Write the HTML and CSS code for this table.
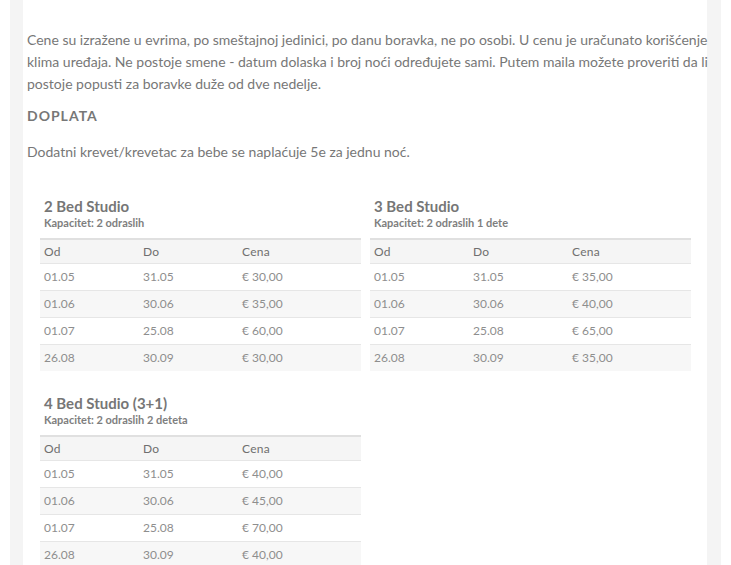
FILE: index.html
```html
<!DOCTYPE html>
<html lang="sr">
<head>
<meta charset="utf-8">
<title>Cene</title>
<link rel="stylesheet" href="styles.css">
</head>
<body>
<div class="frame">
  <main class="panel">
    <p class="intro">Cene su izražene u evrima, po smeštajnoj jedinici, po danu boravka, ne po osobi. U cenu je uračunato korišćenje<br>klima uređaja. Ne postoje smene - datum dolaska i broj noći određujete sami. Putem maila možete proveriti da li<br>postoje popusti za boravke duže od dve nedelje.</p>
    <p class="label">DOPLATA</p>
    <p class="note">Dodatni krevet/krevetac za bebe se naplaćuje 5e za jednu noć.</p>

    <div class="rooms">
      <section class="room">
        <h3 class="room-title">2 Bed Studio</h3>
        <p class="room-cap">Kapacitet: 2 odraslih</p>
        <table class="prices">
          <thead><tr><th>Od</th><th>Do</th><th>Cena</th></tr></thead>
          <tbody>
            <tr><td>01.05</td><td>31.05</td><td>€ 30,00</td></tr>
            <tr><td>01.06</td><td>30.06</td><td>€ 35,00</td></tr>
            <tr><td>01.07</td><td>25.08</td><td>€ 60,00</td></tr>
            <tr><td>26.08</td><td>30.09</td><td>€ 30,00</td></tr>
          </tbody>
        </table>
      </section>
      <section class="room">
        <h3 class="room-title">3 Bed Studio</h3>
        <p class="room-cap">Kapacitet: 2 odraslih 1 dete</p>
        <table class="prices">
          <thead><tr><th>Od</th><th>Do</th><th>Cena</th></tr></thead>
          <tbody>
            <tr><td>01.05</td><td>31.05</td><td>€ 35,00</td></tr>
            <tr><td>01.06</td><td>30.06</td><td>€ 40,00</td></tr>
            <tr><td>01.07</td><td>25.08</td><td>€ 65,00</td></tr>
            <tr><td>26.08</td><td>30.09</td><td>€ 35,00</td></tr>
          </tbody>
        </table>
      </section>
      <section class="room">
        <h3 class="room-title">4 Bed Studio (3+1)</h3>
        <p class="room-cap">Kapacitet: 2 odraslih 2 deteta</p>
        <table class="prices">
          <thead><tr><th>Od</th><th>Do</th><th>Cena</th></tr></thead>
          <tbody>
            <tr><td>01.05</td><td>31.05</td><td>€ 40,00</td></tr>
            <tr><td>01.06</td><td>30.06</td><td>€ 45,00</td></tr>
            <tr><td>01.07</td><td>25.08</td><td>€ 70,00</td></tr>
            <tr><td>26.08</td><td>30.09</td><td>€ 40,00</td></tr>
          </tbody>
        </table>
      </section>
    </div>
  </main>
</div>
</body>
</html>
```
FILE: styles.css
```css
html, body {
  margin: 0;
  padding: 0;
  background: #ffffff;
  height: 100%;
  overflow: hidden;
}
body {
  font-family: Lato, "Open Sans", "Liberation Sans", sans-serif;
  color: #777777;
}
.frame {
  margin: 0 10px;
  padding: 0 14px 0 13px;
  background: #f4f4f4;
  min-height: 100%;
  box-sizing: border-box;
}
.panel {
  background: #ffffff;
  min-height: 565px;
  padding: 29px 0 0 4px;
  box-sizing: border-box;
}
.intro {
  margin: 0 0 10px;
  font-size: 14px;
  line-height: 22px;
  white-space: nowrap;
}
.label {
  margin: 0 0 14px;
  font-size: 14px;
  line-height: 22px;
  font-weight: 700;
  letter-spacing: 1px;
}
.note {
  margin: 0 0 34px;
  font-size: 14px;
  line-height: 22px;
}
.rooms {
  margin-left: 13px;
  display: grid;
  grid-template-columns: 321px 321px;
  column-gap: 9px;
  row-gap: 23px;
}
.room-title {
  margin: 0;
  padding-left: 4px;
  font-size: 15px;
  line-height: 18px;
  font-weight: 700;
  color: #767676;
}
.room-cap {
  margin: 0 0 7px;
  padding-left: 4px;
  font-size: 11px;
  line-height: 16px;
  font-weight: 700;
  color: #7e7e7e;
}
.prices {
  width: 100%;
  border-collapse: collapse;
  border-top: 2px solid #e0e0e0;
  font-size: 12px;
}
.prices th {
  text-align: left;
  font-weight: 400;
  color: #6f6f6f;
  background: #f5f5f5;
  padding: 3px 4px;
  line-height: 17px;
  border-bottom: 1px solid #e6e6e6;
  letter-spacing: 0.3px;
}
.prices th:nth-child(1), .prices th:nth-child(2) {
  width: 91px;
}
.prices td {
  padding: 4px 4px;
  line-height: 18px;
  color: #8e8e8e;
  border-top: 1px solid #e6e6e6;
}
.prices thead + tbody tr:first-child td {
  border-top: none;
}
.prices tbody tr:nth-child(even) td {
  background: #f7f7f7;
}
```
